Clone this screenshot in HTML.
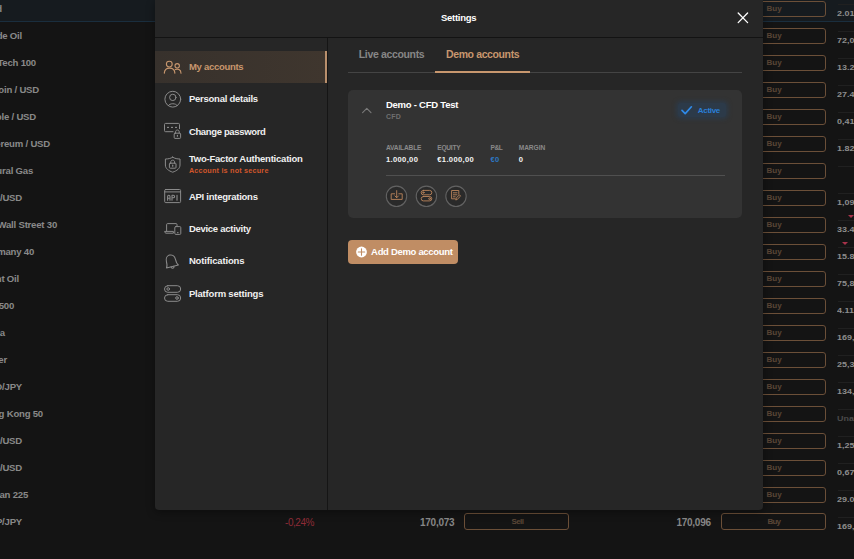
<!DOCTYPE html>
<html><head><meta charset="utf-8"><title>Settings</title>
<style>
*{box-sizing:border-box;margin:0;padding:0}
html,body{width:854px;height:559px;overflow:hidden;background:#141414;font-family:"Liberation Sans",sans-serif;}
#root{position:relative;width:854px;height:559px;overflow:hidden;background:#141414}
.row0{position:absolute;left:0;top:0;width:854px;height:22px;background:#161b1f;border-bottom:1px solid #1a2e3e}
.lt{position:absolute;white-space:nowrap;font-size:9.6px;line-height:14px;font-weight:bold;color:#898989;letter-spacing:-0.22px}
.rn{position:absolute;left:837px;white-space:nowrap;font-size:6.4px;line-height:10px;font-weight:bold;color:#8d8d8d;transform:scaleX(1.4);transform-origin:0 50%}
.rn.dim{color:#4a4a4a}
.rl{position:absolute;left:838px;width:16px;height:1px;background:#202020}
.btn{position:absolute;height:16px;border:1px solid #6b4f38;border-radius:3px;font-size:8px;line-height:13px;font-weight:bold;color:#5a4636}
.bl{position:absolute;left:65.5px;top:0}
.tri{position:absolute;width:0;height:0;border-left:3px solid transparent;border-right:3px solid transparent;border-top:3px solid #a8324a}
.tx{position:absolute;white-space:nowrap;line-height:14px}
#modal{position:absolute;left:155px;top:0;width:608px;height:510px;background:#262626;border-radius:0 0 4px 4px;box-shadow:0 2px 8px rgba(0,0,0,.4)}
#hdr{position:absolute;left:155px;top:0;width:608px;height:38px;border-bottom:1px solid #131313}
#side{position:absolute;left:155px;top:38px;width:173px;height:472px;border-right:1px solid #151515}
.act{position:absolute;left:155px;top:51px;width:172px;height:32px;background:linear-gradient(90deg,#37312c,#3f362e);border-right:2px solid #b98f6c}
#tabline{position:absolute;left:348px;top:72px;width:394px;height:1px;background:#444}
#tabact{position:absolute;left:435px;top:71px;width:95px;height:2px;background:#c8976e}
#card{position:absolute;left:348px;top:90px;width:394px;height:128px;background:#333;border-radius:5px}
#cdiv{position:absolute;left:386px;top:175px;width:339px;height:1px;background:#505050}
#badge{position:absolute;left:678px;top:103px;width:48px;height:14px;background:#2c3a49;border-radius:3px;box-shadow:0 0 4px 2px #2c3a49}
#addb{position:absolute;left:348px;top:240px;width:110px;height:24px;background:#c08d64;border-radius:4px}
svg{position:absolute;overflow:visible}
</style></head><body><div id="root">
<div class="row0"></div>
<div class="lt" style="top:2.3px;right:852px">Gold</div>
<div class="lt" style="top:29.3px;right:832px">Crude Oil</div>
<div class="lt" style="top:56.3px;right:818px">US Tech 100</div>
<div class="lt" style="top:83.3px;right:815px">Bitcoin / USD</div>
<div class="lt" style="top:110.3px;right:818px">Ripple / USD</div>
<div class="lt" style="top:137.3px;right:804px">Ethereum / USD</div>
<div class="lt" style="top:164.3px;right:821px">Natural Gas</div>
<div class="lt" style="top:191.3px;right:832px">EUR/USD</div>
<div class="lt" style="top:218.3px;right:797px">Wall Street 30</div>
<div class="lt" style="top:245.3px;right:820px">Germany 40</div>
<div class="lt" style="top:272.3px;right:835px">Brent Oil</div>
<div class="lt" style="top:299.3px;right:840px">US 500</div>
<div class="lt" style="top:326.3px;right:849px">Tesla</div>
<div class="lt" style="top:353.3px;right:847px">Silver</div>
<div class="lt" style="top:380.3px;right:832px">USD/JPY</div>
<div class="lt" style="top:407.3px;right:811px">Hong Kong 50</div>
<div class="lt" style="top:434.3px;right:832px">GBP/USD</div>
<div class="lt" style="top:461.3px;right:832px">AUD/USD</div>
<div class="lt" style="top:488.3px;right:826px">Japan 225</div>
<div class="lt" style="top:515.3px;right:832px">GBP/JPY</div>
<div class="rl" style="top:4.4px"></div>
<div class="rn" style="top:8.9px">2.015</div>
<div class="rl" style="top:31.4px"></div>
<div class="rn" style="top:35.9px">72,05</div>
<div class="rl" style="top:58.4px"></div>
<div class="rn" style="top:62.9px">13.23</div>
<div class="rl" style="top:85.4px"></div>
<div class="rn" style="top:89.9px">27.41</div>
<div class="rl" style="top:112.4px"></div>
<div class="rn" style="top:116.9px">0,418</div>
<div class="rl" style="top:139.4px"></div>
<div class="rn" style="top:143.9px">1.825</div>
<div class="rl" style="top:166.4px"></div>
<div class="rl" style="top:193.4px"></div>
<div class="rn" style="top:197.9px">1,097</div>
<div class="rl" style="top:220.4px"></div>
<div class="rn" style="top:224.9px">33.47</div>
<div class="rl" style="top:247.4px"></div>
<div class="rn" style="top:251.9px">15.87</div>
<div class="rl" style="top:274.4px"></div>
<div class="rn" style="top:278.9px">75,88</div>
<div class="rl" style="top:301.4px"></div>
<div class="rn" style="top:305.9px">4.116</div>
<div class="rl" style="top:328.4px"></div>
<div class="rn" style="top:332.9px">169,3</div>
<div class="rl" style="top:355.4px"></div>
<div class="rn" style="top:359.9px">25,31</div>
<div class="rl" style="top:382.4px"></div>
<div class="rn" style="top:386.9px">134,7</div>
<div class="rl" style="top:409.4px"></div>
<div class="rn dim" style="top:413.9px">Unava</div>
<div class="rl" style="top:436.4px"></div>
<div class="rn" style="top:440.9px">1,259</div>
<div class="rl" style="top:463.4px"></div>
<div class="rn" style="top:467.9px">0,675</div>
<div class="rl" style="top:490.4px"></div>
<div class="rn" style="top:494.9px">29.06</div>
<div class="rl" style="top:517.4px"></div>
<div class="rn" style="top:521.9px">169,8</div>
<div class="btn" style="top:1px;left:700px;width:126px"><span class="bl">Buy</span></div>
<div class="btn" style="top:28px;left:700px;width:126px"><span class="bl">Buy</span></div>
<div class="btn" style="top:55px;left:700px;width:126px"><span class="bl">Buy</span></div>
<div class="btn" style="top:82px;left:700px;width:126px"><span class="bl">Buy</span></div>
<div class="btn" style="top:109px;left:700px;width:126px"><span class="bl">Buy</span></div>
<div class="btn" style="top:136px;left:700px;width:126px"><span class="bl">Buy</span></div>
<div class="btn" style="top:163px;left:700px;width:126px"><span class="bl">Buy</span></div>
<div class="btn" style="top:190px;left:700px;width:126px"><span class="bl">Buy</span></div>
<div class="btn" style="top:217px;left:700px;width:126px"><span class="bl">Buy</span></div>
<div class="btn" style="top:244px;left:700px;width:126px"><span class="bl">Buy</span></div>
<div class="btn" style="top:271px;left:700px;width:126px"><span class="bl">Buy</span></div>
<div class="btn" style="top:298px;left:700px;width:126px"><span class="bl">Buy</span></div>
<div class="btn" style="top:325px;left:700px;width:126px"><span class="bl">Buy</span></div>
<div class="btn" style="top:352px;left:700px;width:126px"><span class="bl">Buy</span></div>
<div class="btn" style="top:379px;left:700px;width:126px"><span class="bl">Buy</span></div>
<div class="btn" style="top:406px;left:700px;width:126px"><span class="bl">Buy</span></div>
<div class="btn" style="top:433px;left:700px;width:126px"><span class="bl">Buy</span></div>
<div class="btn" style="top:460px;left:700px;width:126px"><span class="bl">Buy</span></div>
<div class="btn" style="top:487px;left:700px;width:126px"><span class="bl">Buy</span></div>
<div class="tri" style="left:848px;top:215px"></div>
<div class="tri" style="left:842px;top:242px"></div>
<div class="btn" style="top:513px;left:464px;width:105px;height:17px"></div>
<div class="btn" style="top:513px;left:721px;width:105px;height:17px"></div>
<div id="modal"></div>
<div id="hdr"></div>
<div id="side"></div>
<div class="act"></div>
<div id="tabline"></div><div id="tabact"></div>
<div id="card"></div><div id="cdiv"></div><div id="badge"></div>
<div id="addb"></div>
<svg id="ov" style="left:0;top:0" width="854" height="559" viewBox="0 0 854 559" fill="none" stroke-linecap="round" stroke-linejoin="round">
<!-- close X -->
<path d="M738.2 13L747.6 22.6M747.6 13L738.2 22.6" stroke="#ffffff" stroke-width="1.3"/>
<!-- nav: users (active, tan) -->
<g stroke="#c8976e" stroke-width="1.1">
 <circle cx="169.3" cy="64.1" r="2.9"/>
 <path d="M164.3 73.1Q164.7 68.1 169.6 68.1Q174.5 68.1 174.9 73.1"/>
 <circle cx="177.2" cy="65.8" r="2.2"/>
 <path d="M175.2 69.6C177.6 68.4 181 69.6 181 73.2"/>
</g>
<g stroke="#8b8b8b" stroke-width="1">
<!-- personal details -->
 <circle cx="172.8" cy="99.2" r="7.9"/>
 <circle cx="172.8" cy="97.4" r="3.2"/>
 <path d="M168.4 105.6C169.4 103 176.2 103 177.2 105.6"/>
<!-- change password -->
 <path d="M173 131.7H165.6Q164.5 131.7 164.5 130.6V124.5Q164.5 123.4 165.6 123.4H178.4Q179.5 123.4 179.5 124.5V128.6"/>
 <path d="M167.6 127.4H168.4M171.6 127.4H172.4M175.6 127.4H176.4" stroke-width="1.3"/>
 <rect x="174.2" y="133.2" width="6.4" height="5.2" rx="0.8"/>
 <path d="M175.6 133.2V131.8C175.6 129.4 179.2 129.4 179.2 131.8V133.2"/>
 <path d="M177.4 135.4V136.2" stroke-width="1.2"/>
<!-- 2FA shield -->
 <path d="M172.7 157.2C170.6 158.6 168 159 165.4 159V165C165.4 168.6 168.6 170.8 172.7 172.2C176.8 170.8 180 168.6 180 165V159C177.4 159 174.8 158.6 172.7 157.2Z"/>
 <rect x="169.4" y="163.2" width="6.6" height="5" rx="0.8"/>
 <path d="M170.8 163.2V161.9C170.8 159.6 174.6 159.6 174.6 161.9V163.2"/>
 <path d="M172.7 165.2V166.2" stroke-width="1.2"/>
<!-- API -->
 <rect x="164.7" y="189.5" width="15.9" height="13.1" rx="1"/>
 <path d="M164.7 191.9H180.6"/>
 <path d="M167.6 200.2V196.8Q167.6 195.2 168.8 195.2Q170 195.2 170 196.8V200.2M167.6 198.2H170M172 200.2V195.2H173.2Q174.6 195.2 174.6 196.5Q174.6 197.8 173.2 197.8H172M177 195.2V200.2" stroke-width="1.1"/>
<!-- devices -->
 <path d="M166.6 231.2V224.6Q166.6 223.6 167.6 223.6H176Q177 223.6 177 224.6V226M165 231.4H173.4V233.2H165.8Q165 233.2 165 232.4Z"/>
 <rect x="174.8" y="226.6" width="6" height="7.8" rx="1"/>
 <path d="M177.6 232.6H178" stroke-width="1.1"/>
<!-- bell -->
 <g transform="translate(-1.1 0) rotate(-14 172 262) translate(172 262) scale(1.06) translate(-172 -262)">
  <path d="M166.6 266.4H178.2C176.8 265 176.8 263.6 176.8 260.6C176.8 257.4 174.8 255.4 172.4 255.4C170 255.4 168 257.4 168 260.6C168 263.6 168 265 166.6 266.4Z"/>
  <path d="M171 266.6C171 268.6 173.8 268.6 173.8 266.6"/>
 </g>
<!-- toggles -->
 <rect x="164.5" y="285.7" width="16.2" height="6.6" rx="3.3"/>
 <circle cx="168.2" cy="289" r="1.3"/>
 <rect x="164.5" y="294.7" width="16.2" height="6.6" rx="3.3"/>
 <circle cx="177" cy="298" r="1.3"/>
</g>
<!-- chevron -->
<path d="M362.6 112.6L366.8 108.3L371 112.6" stroke="#7a7a7a" stroke-width="1.1"/>
<!-- active check -->
<path d="M682 110.4L685.2 113.6L691.4 106.8" stroke="#2f8ae8" stroke-width="1.7"/>
<!-- card circles -->
<g stroke="#626262" stroke-width="1.1" fill="#2a2a2a">
 <circle cx="396.5" cy="196.3" r="10.2"/>
 <circle cx="426.4" cy="196.3" r="10.2"/>
 <circle cx="456" cy="196.3" r="10.2"/>
</g>
<g stroke="#bb855b" stroke-width="0.9">
 <!-- deposit -->
 <path d="M394.6 193.8H391.2V199.4H402.2V193.8H398.8"/>
 <path d="M396.7 190.6V197.6M394.9 195.9L396.7 197.7L398.5 195.9"/>
 <!-- toggles -->
 <rect x="421.2" y="190.4" width="10.6" height="4.4" rx="2.2"/>
 <rect x="421.2" y="196.5" width="10.6" height="4.4" rx="2.2"/>
 <circle cx="423.4" cy="192.6" r="0.7"/>
 <circle cx="429.6" cy="198.7" r="0.9"/>
 <!-- doc + pencil -->
 <path d="M455 198.8H451.6V190.5H458.8V194.2"/>
 <path d="M453.4 192.8H457M453.4 194.8H457M453.4 196.8H455.2"/>
 <path d="M455.8 199.6L456.2 198L459.4 194.9L460.6 196.1L457.4 199.2Z" stroke-width="0.9"/>
</g>
<!-- add button plus -->
<circle cx="361.5" cy="252" r="5.4" fill="#ffffff"/>
<path d="M361.5 248.8V255.2M358.3 252H364.7" stroke="#c08d64" stroke-width="1.1"/>
</svg>

<div class="tx" id="ttl" style="left:441.0px;top:11.1px;font-size:9.5px;font-weight:bold;color:#ffffff;letter-spacing:-0.275px">Settings</div>
<div class="tx" id="n1" style="left:188.9px;top:59.8px;font-size:9.5px;font-weight:bold;color:#c8976e;letter-spacing:-0.278px">My accounts</div>
<div class="tx" id="n2" style="left:188.9px;top:91.8px;font-size:9.5px;font-weight:bold;color:#f0f0f0;letter-spacing:-0.243px">Personal details</div>
<div class="tx" id="n3" style="left:188.9px;top:124.7px;font-size:9.5px;font-weight:bold;color:#f0f0f0;letter-spacing:-0.350px">Change password</div>
<div class="tx" id="n4" style="left:188.9px;top:151.7px;font-size:9.5px;font-weight:bold;color:#f0f0f0;letter-spacing:-0.220px">Two-Factor Authentication</div>
<div class="tx" id="n4b" style="left:188.9px;top:163.8px;font-size:7.2px;font-weight:bold;color:#d2562b;letter-spacing:0.220px">Account is not secure</div>
<div class="tx" id="n5" style="left:188.9px;top:189.8px;font-size:9.5px;font-weight:bold;color:#f0f0f0;letter-spacing:-0.254px">API integrations</div>
<div class="tx" id="n6" style="left:188.9px;top:221.9px;font-size:9.5px;font-weight:bold;color:#f0f0f0;letter-spacing:-0.275px">Device activity</div>
<div class="tx" id="n7" style="left:188.9px;top:253.7px;font-size:9.5px;font-weight:bold;color:#f0f0f0;letter-spacing:-0.165px">Notifications</div>
<div class="tx" id="n8" style="left:188.9px;top:286.6px;font-size:9.5px;font-weight:bold;color:#f0f0f0;letter-spacing:-0.190px">Platform settings</div>
<div class="tx" id="t1" style="left:358.8px;top:47.3px;font-size:10.5px;font-weight:bold;color:#868686;letter-spacing:-0.347px">Live accounts</div>
<div class="tx" id="t2" style="left:446.0px;top:47.3px;font-size:10.5px;font-weight:bold;color:#c8976e;letter-spacing:-0.383px">Demo accounts</div>
<div class="tx" id="c1" style="left:385.9px;top:97.6px;font-size:9.5px;font-weight:bold;color:#ffffff;letter-spacing:-0.231px">Demo - CFD Test</div>
<div class="tx" id="c2" style="left:385.9px;top:109.8px;font-size:7px;font-weight:bold;color:#6f6f6f;letter-spacing:0.206px">CFD</div>
<div class="tx" id="l1" style="left:385.9px;top:141.3px;font-size:6.6px;font-weight:bold;color:#8a8a8a;letter-spacing:-0.152px">AVAILABLE</div>
<div class="tx" id="l2" style="left:437.3px;top:141.3px;font-size:6.6px;font-weight:bold;color:#8a8a8a;letter-spacing:-0.258px">EQUITY</div>
<div class="tx" id="l3" style="left:490.5px;top:141.3px;font-size:6.6px;font-weight:bold;color:#8a8a8a;letter-spacing:-0.396px">P&amp;L</div>
<div class="tx" id="l4" style="left:518.7px;top:141.3px;font-size:6.6px;font-weight:bold;color:#8a8a8a;letter-spacing:-0.042px">MARGIN</div>
<div class="tx" id="v1" style="left:386.0px;top:153.4px;font-size:7.6px;font-weight:bold;color:#f4f4f4;letter-spacing:0.333px">1.000,00</div>
<div class="tx" id="v2" style="left:437.3px;top:153.4px;font-size:7.6px;font-weight:bold;color:#f4f4f4;letter-spacing:0.326px">€1.000,00</div>
<div class="tx" id="v3" style="left:490.5px;top:153.4px;font-size:7.6px;font-weight:bold;color:#2c78c4;letter-spacing:0.387px">€0</div>
<div class="tx" id="v4" style="left:518.7px;top:153.4px;font-size:7.6px;font-weight:bold;color:#f4f4f4;letter-spacing:0.594px">0</div>
<div class="tx" id="ac" style="left:697.8px;top:104.3px;font-size:8px;font-weight:bold;color:#2a7fd8;letter-spacing:-0.313px">Active</div>
<div class="tx" id="ad" style="left:371.1px;top:245.1px;font-size:9.5px;font-weight:bold;color:#ffffff;letter-spacing:-0.317px">Add Demo account</div>
<div class="tx" id="s1" style="left:511.5px;top:514.5px;font-size:8px;font-weight:bold;color:#5a4636;letter-spacing:-0.624px">Sell</div>
<div class="tx" id="b1" style="left:767.5px;top:514.5px;font-size:8px;font-weight:bold;color:#5a4636;letter-spacing:-0.795px">Buy</div>
<div class="tx" id="p1" style="left:285.0px;top:515.5px;font-size:10px;font-weight:normal;color:#8e2b36;letter-spacing:-0.448px">-0,24%</div>
<div class="tx" id="q1" style="left:420.0px;top:515.5px;font-size:10px;font-weight:bold;color:#868686;letter-spacing:-0.265px">170,073</div>
<div class="tx" id="q2" style="left:676.5px;top:515.5px;font-size:10px;font-weight:bold;color:#868686;letter-spacing:-0.279px">170,096</div>
</div></body></html>
